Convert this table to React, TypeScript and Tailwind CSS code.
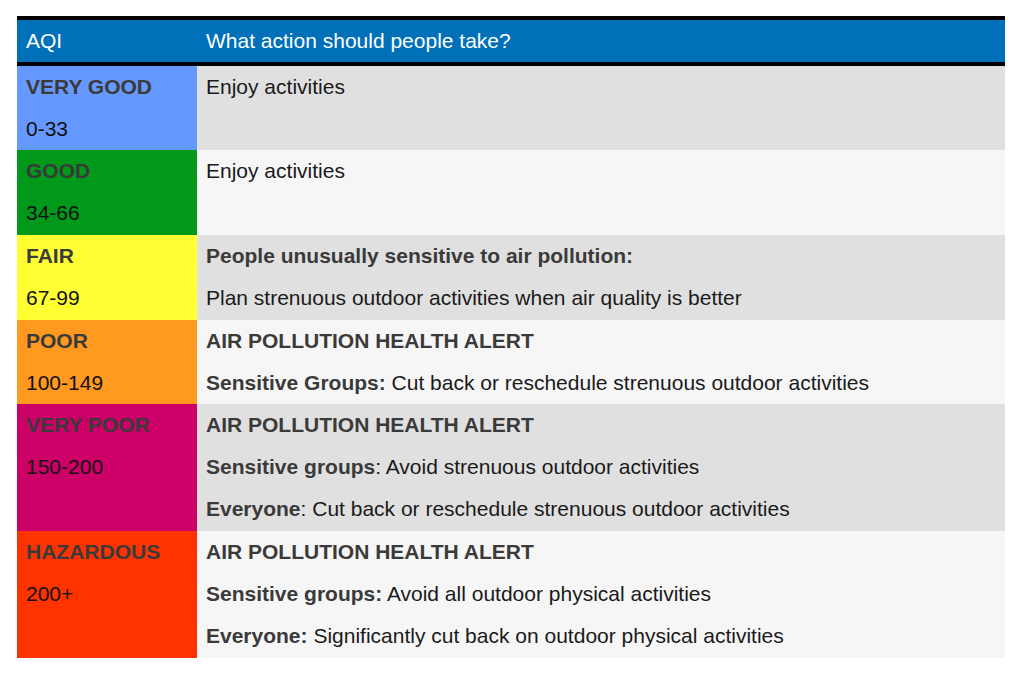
const rows = [
  {
    label: "VERY GOOD",
    range: "0-33",
    bg: "bg-[#6699ff]",
    right: "bg-[#e0e0e0]",
    h: "h-[84px]",
    lines: [<>Enjoy activities</>],
  },
  {
    label: "GOOD",
    range: "34-66",
    bg: "bg-[#00991a]",
    right: "bg-[#f6f6f6]",
    h: "h-[85px]",
    lines: [<>Enjoy activities</>],
  },
  {
    label: "FAIR",
    range: "67-99",
    bg: "bg-[#ffff33]",
    right: "bg-[#e0e0e0]",
    h: "h-[85px]",
    lines: [
      <b className="font-bold text-[#3a3a3a]">People unusually sensitive to air pollution:</b>,
      <>Plan strenuous outdoor activities when air quality is better</>,
    ],
  },
  {
    label: "POOR",
    range: "100-149",
    bg: "bg-[#ff991f]",
    right: "bg-[#f6f6f6]",
    h: "h-[84px]",
    lines: [
      <b className="font-bold text-[#3a3a3a]">AIR POLLUTION HEALTH ALERT</b>,
      <>
        <b className="font-bold text-[#3a3a3a]">Sensitive Groups:</b> Cut back or reschedule strenuous outdoor activities
      </>,
    ],
  },
  {
    label: "VERY POOR",
    range: "150-200",
    bg: "bg-[#cc0066]",
    right: "bg-[#e0e0e0]",
    h: "h-[127px]",
    lines: [
      <b className="font-bold text-[#3a3a3a]">AIR POLLUTION HEALTH ALERT</b>,
      <>
        <b className="font-bold text-[#3a3a3a]">Sensitive groups</b>: Avoid strenuous outdoor activities
      </>,
      <>
        <b className="font-bold text-[#3a3a3a]">Everyone</b>: Cut back or reschedule strenuous outdoor activities
      </>,
    ],
  },
  {
    label: "HAZARDOUS",
    range: "200+",
    bg: "bg-[#ff3300]",
    right: "bg-[#f6f6f6]",
    h: "h-[127px]",
    lines: [
      <b className="font-bold text-[#3a3a3a]">AIR POLLUTION HEALTH ALERT</b>,
      <>
        <b className="font-bold text-[#3a3a3a]">Sensitive groups:</b> Avoid all outdoor physical activities
      </>,
      <>
        <b className="font-bold text-[#3a3a3a]">Everyone:</b> Significantly cut back on outdoor physical activities
      </>,
    ],
  },
]

export default function App() {
  return (
    <div className="w-[1024px] h-[673px] bg-white pt-[16px] pl-[17px] text-[21px] text-[#1a1a1a] font-['Liberation_Sans',Arial,sans-serif]">
      <div className="w-[988px] flex flex-col">
        <div className="flex h-[50px] bg-[#0070b8] border-y-[4px] border-black text-white leading-[42px]">
          <div className="w-[180px] pl-[9px]">AQI</div>
          <div className="flex-1 pl-[9px]">What action should people take?</div>
        </div>
        {rows.map((r) => (
          <div key={r.label} className={`flex ${r.h}`}>
            <div className={`w-[180px] pl-[9px] leading-[42px] ${r.bg}`}>
              <div className="font-bold text-[#3a3a3a]">{r.label}</div>
              <div className="text-[#111]">{r.range}</div>
            </div>
            <div className={`flex-1 pl-[9px] leading-[42px] ${r.right}`}>
              {r.lines.map((l, i) => (
                <div key={i}>{l}</div>
              ))}
            </div>
          </div>
        ))}
      </div>
    </div>
  )
}
